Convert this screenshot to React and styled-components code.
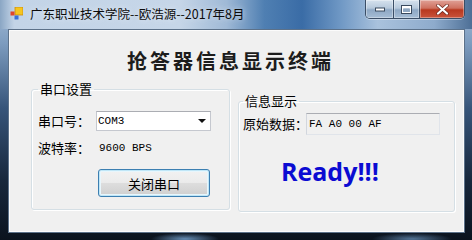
import React from "react";
import styled, { createGlobalStyle } from "styled-components";

const GlobalStyle = createGlobalStyle`
  html, body {
    margin: 0;
    padding: 0;
    width: 472px;
    height: 240px;
    overflow: hidden;
    background: #0e1826;
  }
  * { box-sizing: border-box; }
`;

const Window = styled.div`
  width: 472px;
  height: 240px;
  display: flex;
  flex-direction: column;
  font-family: "Noto Sans CJK SC", "Noto Sans", sans-serif;
  background:
    radial-gradient(ellipse 34px 6px at 185px 239px, rgba(130, 180, 230, 0.75), transparent),
    radial-gradient(ellipse 40px 6px at 412px 239px, rgba(130, 180, 230, 0.6), transparent),
    linear-gradient(180deg, #a9c0da 0%, #7d9cbf 18%, #37557a 45%, #18283d 75%, #0b131e 100%);
`;

const TitleBar = styled.div`
  height: 29px;
  display: flex;
  align-items: flex-start;
  padding-left: 10px;
  background: linear-gradient(
    90deg,
    #8aa6c4 0%,
    #c3d4e7 3%,
    #c6d6e8 38%,
    #9fb9d6 48%,
    #4f7fb2 56%,
    #3a6ca6 64%,
    #6e97c4 72%,
    #a9c2dd 80%,
    #8eabcc 92%,
    #4d6f96 100%
  );
`;

const AppIcon = styled.svg`
  margin-top: 7px;
  flex: none;
`;

const Title = styled.div`
  margin-left: 7px;
  margin-top: 5px;
  font-size: 12.5px;
  line-height: 17px;
  color: #0b0b0b;
  white-space: nowrap;
  text-shadow: 0 0 6px rgba(235, 242, 250, 0.9);
`;

const Captions = styled.div`
  margin-left: auto;
  margin-right: 7px;
  display: flex;
  height: 19px;
  border: 1px solid #3b4e66;
  border-top: none;
  border-radius: 0 0 5px 5px;
  overflow: hidden;
  box-shadow: 0 1px 0 rgba(255, 255, 255, 0.35);
`;

const CaptionButton = styled.div`
  width: ${(p) => p.$width}px;
  display: flex;
  align-items: center;
  justify-content: center;
  border-left: ${(p) => (p.$first ? "none" : "1px solid #3b4e66")};
  background: ${(p) =>
    p.$close
      ? "linear-gradient(180deg, #e0a197 0%, #cf7160 45%, #b8381f 55%, #c9533a 100%)"
      : "linear-gradient(180deg, #d6e2ee 0%, #b7c9dc 45%, #8ea8c4 55%, #a6bdd5 100%)"};
  box-shadow: inset 0 0 0 1px rgba(255, 255, 255, 0.35);
`;

const Frame = styled.div`
  flex: 1;
  display: flex;
  padding: 0 7px 7px 8px;
`;

const Client = styled.div`
  flex: 1;
  display: flex;
  flex-direction: column;
  background: #f0f0f0;
  border: 1px solid #5c7189;
  box-shadow: inset 0 0 0 1px #fbfbfb;
`;

const Heading = styled.div`
  margin: 19px 0 0 118px;
  font-size: 20px;
  line-height: 24px;
  font-weight: 700;
  letter-spacing: 3px;
  color: #1c1c1c;
  white-space: nowrap;
`;

const Groups = styled.div`
  display: flex;
  align-items: flex-start;
  gap: 8px;
  margin-top: 8px;
  padding-left: 22px;
`;

const Group = styled.fieldset`
  margin: ${(p) => p.$top || 0}px 0 0 0;
  width: ${(p) => p.$width}px;
  height: ${(p) => p.$height}px;
  min-width: 0;
  padding: ${(p) => p.$padTop}px 0 0 ${(p) => p.$padLeft}px;
  border: 1px solid #d5dfe5;
  border-radius: 3px;
  box-shadow: 1px 1px 0 #ffffff, inset 1px 1px 0 #ffffff;
`;

const Legend = styled.legend`
  padding: 0 2px;
  margin-left: 0;
  font-size: 13px;
  line-height: 16px;
  color: #000;
`;

const Row = styled.div`
  display: flex;
  align-items: center;
  height: ${(p) => p.$height || 20}px;
  margin-top: ${(p) => p.$gap || 0}px;
`;

const Label = styled.div`
  width: ${(p) => p.$width}px;
  flex: none;
  font-size: 13px;
  line-height: 16px;
  color: #000;
  white-space: nowrap;
`;

const MonoText = styled.span`
  font-family: "Liberation Mono", "DejaVu Sans Mono", monospace;
  font-size: 11px;
  color: #000;
  padding-left: ${(p) => p.$pad || 0}px;
  white-space: pre;
`;

const Combo = styled.div`
  width: 115px;
  height: 20px;
  display: flex;
  align-items: center;
  justify-content: space-between;
  padding: 0 4px 0 1px;
  background: #fff;
  border: 1px solid #c5c8cf;
  border-top-color: #abadb3;
`;

const Arrow = styled.span`
  width: 0;
  height: 0;
  border-left: 4px solid transparent;
  border-right: 4px solid transparent;
  border-top: 4px solid #111;
`;

const Button = styled.div`
  margin: 11px 0 0 ${(p) => p.$left}px;
  width: 112px;
  height: 28px;
  display: flex;
  align-items: center;
  justify-content: center;
  font-size: 13px;
  color: #000;
  border: 1px solid #3c7fb1;
  border-radius: 3px;
  background: linear-gradient(180deg, #f2f2f2 0%, #ebebeb 48%, #dddddd 52%, #cfcfcf 100%);
  box-shadow: inset 0 0 0 1px #bfe6f7, inset 0 0 0 2px #e8f6fc;
`;

const ReadBox = styled.div`
  width: 134px;
  height: 22px;
  display: flex;
  align-items: center;
  padding-left: 2px;
  background: #f0f0f0;
  border: 1px solid #e0e4ea;
  border-top-color: #abadb3;
  border-left-color: #d2d6dd;
`;

const Ready = styled.div`
  margin: 21px 0 0 38px;
  font-family: "Open Sans", "Noto Sans", sans-serif;
  font-size: 25px;
  line-height: 30px;
  font-weight: 700;
  color: #0b0bd2;
`;

export default function App() {
  return (
    <>
      <GlobalStyle />
      <Window>
        <TitleBar>
          <AppIcon width="13" height="13" viewBox="0 0 13 13">
            <rect x="5" y="0" width="8" height="8" fill="#f6c51e" stroke="#c98a0a" strokeWidth="0.8" />
            <rect x="0.5" y="4.5" width="4" height="4" fill="#e0452a" />
            <rect x="4.5" y="8.5" width="4" height="4" fill="#3a6fd8" />
          </AppIcon>
          <Title>广东职业技术学院--欧浩源--2017年8月</Title>
          <Captions>
            <CaptionButton $width={27} $first>
              <svg width="10" height="5" viewBox="0 0 10 5">
                <rect x="0.5" y="1" width="9" height="3" fill="#fff" stroke="#3a4a5e" strokeWidth="1" />
              </svg>
            </CaptionButton>
            <CaptionButton $width={26}>
              <svg width="11" height="9" viewBox="0 0 11 9">
                <rect x="0.5" y="0.5" width="10" height="8" fill="none" stroke="#3a4a5e" strokeWidth="1" />
                <rect x="1.5" y="1.5" width="8" height="6" fill="none" stroke="#fff" strokeWidth="1" />
                <rect x="2" y="2" width="7" height="1.5" fill="#fff" />
                <rect x="2.5" y="3.5" width="6" height="3" fill="#8ea6c0" />
              </svg>
            </CaptionButton>
            <CaptionButton $width={45} $close>
              <svg width="13" height="11" viewBox="0 0 13 11">
                <path d="M2 1.5 L11 9.5 M11 1.5 L2 9.5" stroke="#6e2a20" strokeWidth="3.6" strokeLinecap="round" />
                <path d="M2 1.5 L11 9.5 M11 1.5 L2 9.5" stroke="#fff" strokeWidth="2.2" strokeLinecap="round" />
              </svg>
            </CaptionButton>
          </Captions>
        </TitleBar>
        <Frame>
          <Client>
            <Heading>抢答器信息显示终端</Heading>
            <Groups>
              <Group $width={199} $height={129} $padTop={14} $padLeft={6}>
                <Legend>串口设置</Legend>
                <Row>
                  <Label $width={58}>串口号：</Label>
                  <Combo>
                    <MonoText>COM3</MonoText>
                    <Arrow />
                  </Combo>
                </Row>
                <Row $gap={7}>
                  <Label $width={58}>波特率：</Label>
                  <MonoText $pad={3}>9600 BPS</MonoText>
                </Row>
                <Button $left={60}>关闭串口</Button>
              </Group>
              <Group $width={217} $height={119} $top={12} $padTop={4} $padLeft={4}>
                <Legend>信息显示</Legend>
                <Row $height={22}>
                  <Label $width={63}>原始数据：</Label>
                  <ReadBox>
                    <MonoText>FA A0 00 AF</MonoText>
                  </ReadBox>
                </Row>
                <Ready>Ready!!!</Ready>
              </Group>
            </Groups>
          </Client>
        </Frame>
      </Window>
    </>
  );
}
